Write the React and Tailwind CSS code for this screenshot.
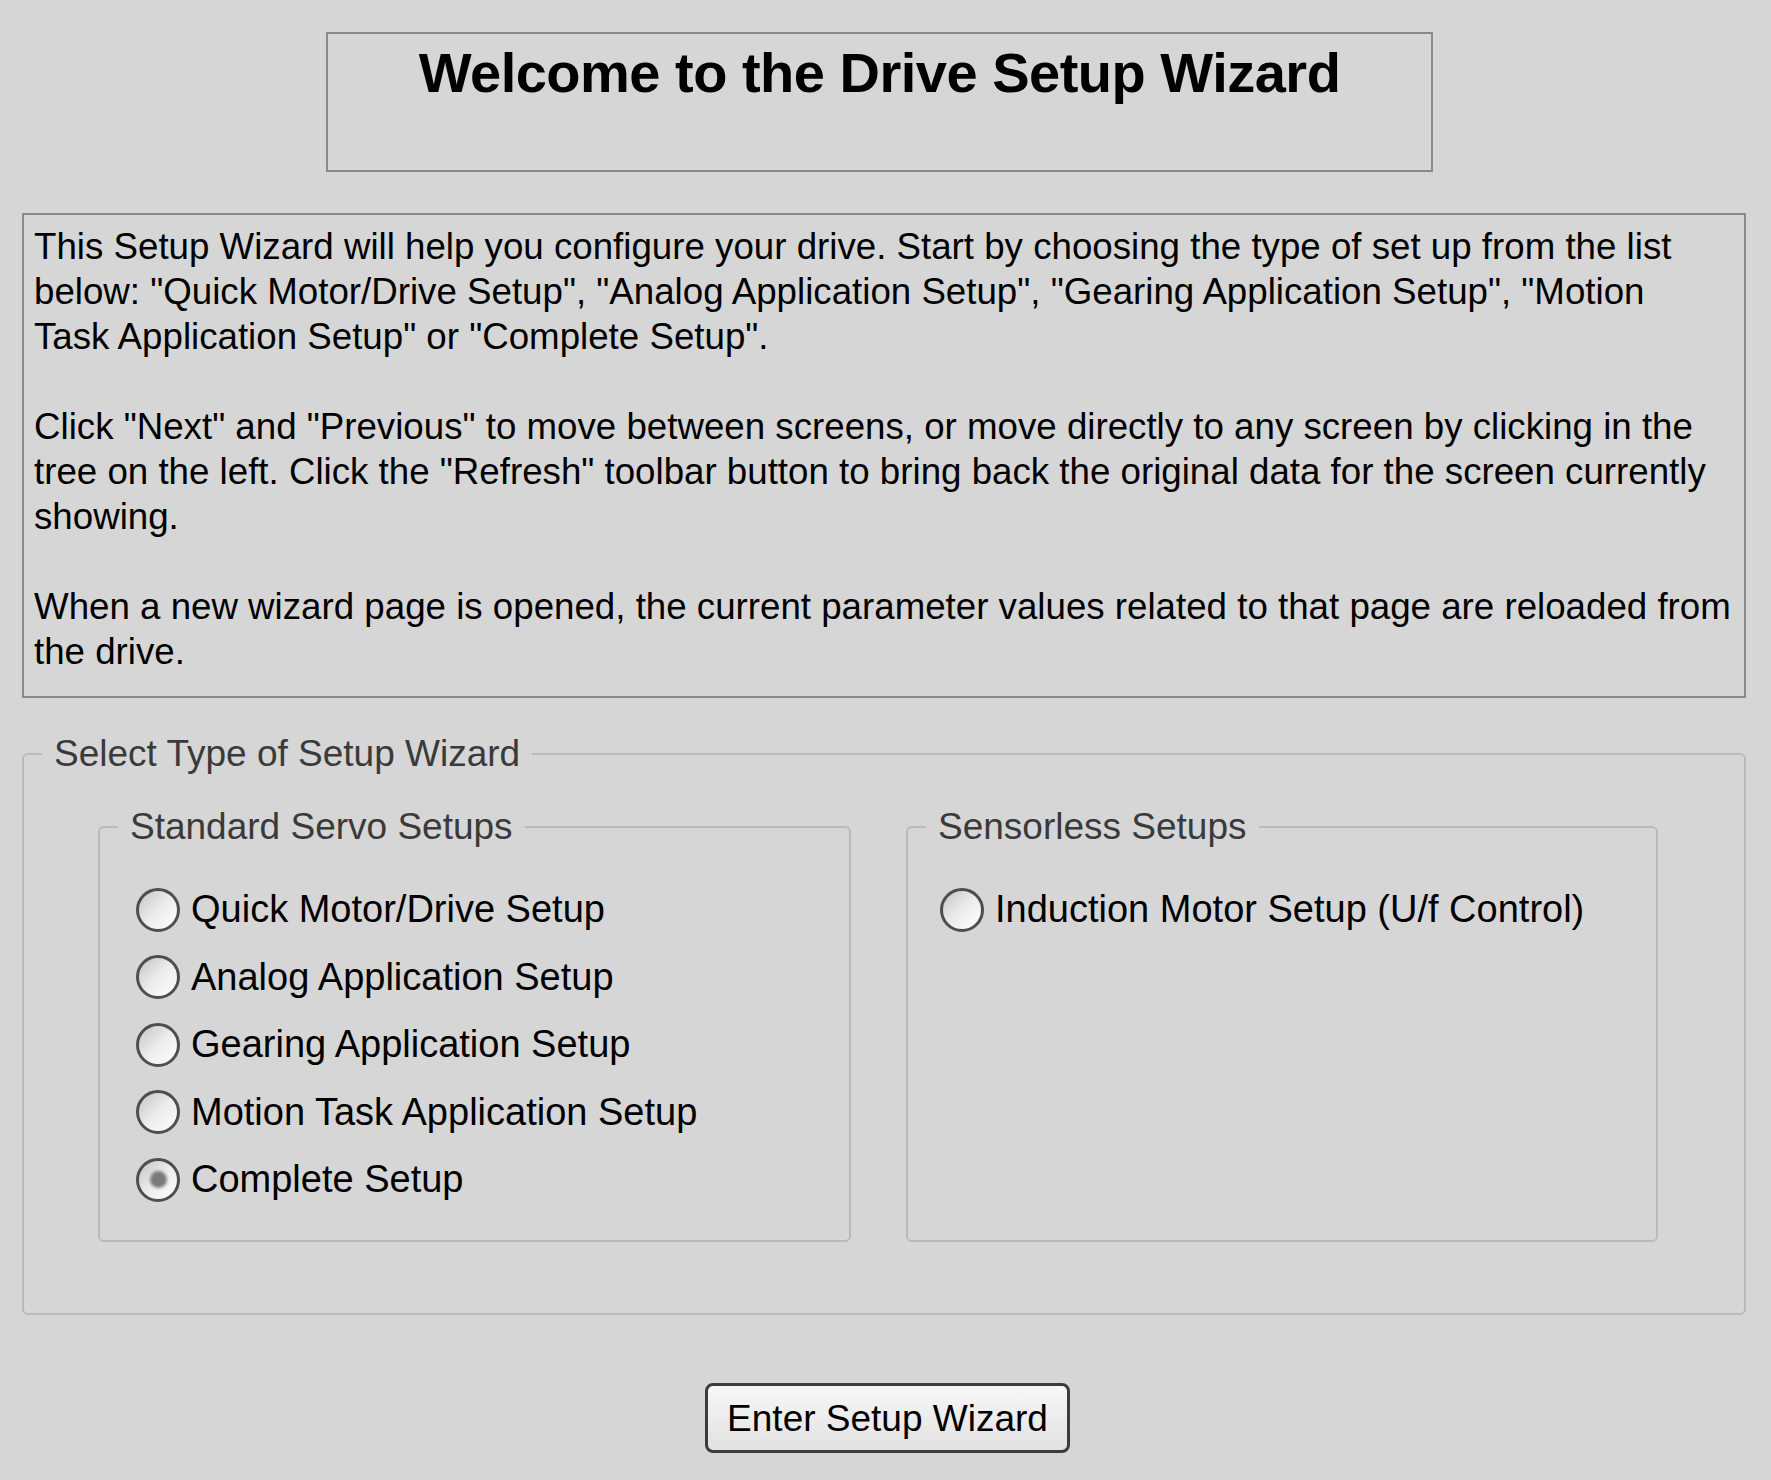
import React from 'react';

const servoOptions = [
  { label: 'Quick Motor/Drive Setup' },
  { label: 'Analog Application Setup' },
  { label: 'Gearing Application Setup' },
  { label: 'Motion Task Application Setup' },
  { label: 'Complete Setup', checked: true },
];

const intro = [
  [
    'This Setup Wizard will help you configure your drive. Start by choosing the type of set up from the list',
    'below: "Quick Motor/Drive Setup", "Analog Application Setup", "Gearing Application Setup", "Motion',
    'Task Application Setup" or "Complete Setup".',
  ],
  [
    'Click "Next" and "Previous" to move between screens, or move directly to any screen by clicking in the',
    'tree on the left. Click the "Refresh" toolbar button to bring back the original data for the screen currently',
    'showing.',
  ],
  [
    'When a new wizard page is opened, the current parameter values related to that page are reloaded from',
    'the drive.',
  ],
];

function Radio({ checked }) {
  return (
    <span className="flex h-[44px] w-[44px] flex-shrink-0 items-center justify-center rounded-full border-[3px] border-[#4e4e4e] bg-gradient-to-br from-[#c4c4c4] via-[#ececec] to-white">
      {checked && <span className="h-[17px] w-[17px] rounded-full bg-[#7a7a7a] blur-[1.5px]" />}
    </span>
  );
}

function Option({ label, checked }) {
  return (
    <div className="flex h-[67.5px] items-center gap-[11px] text-[38px]">
      <Radio checked={checked} />
      <span className="whitespace-nowrap">{label}</span>
    </div>
  );
}

function Group({ title, children, className = '' }) {
  return (
    <fieldset className={`rounded-[6px] border-2 border-[#bababa] p-0 ${className}`}>
      <legend className="ml-[18px] px-[12px] text-[37px] leading-[45px] text-[#3a3a3a]">{title}</legend>
      {children}
    </fieldset>
  );
}

export default function App() {
  return (
    <div className="min-h-screen w-full bg-[#d6d6d6] px-[22px] pt-[32px] font-['Liberation_Sans',Arial,sans-serif] text-[37px] leading-[45px] text-black">
      <div className="ml-[304px] h-[140px] w-[1107px] border-2 border-[#8a8a8a] pt-[11px] text-center">
        <h1 className="text-[56px] font-bold leading-[56px] tracking-[-0.5px]">Welcome to the Drive Setup Wizard</h1>
      </div>

      <div className="mt-[41px] h-[485px] w-[1724px] border-2 border-[#8a8a8a] pl-[10px] pt-[9px] text-[36.7px]">
        {intro.map((para, i) => (
          <p key={i} className={i > 0 ? 'mt-[45px]' : ''}>
            {para.map((line) => (
              <span key={line} className="block whitespace-nowrap">
                {line}
              </span>
            ))}
          </p>
        ))}
      </div>

      <Group title="Select Type of Setup Wizard" className="mt-[33px] w-[1724px] pb-[71px]">
        <div className="mt-[28px] flex gap-[55px] pl-[74px]">
          <Group title="Standard Servo Setups" className="h-[438px] w-[753px]">
            <div className="mt-[27px] pl-[36px]">
              {servoOptions.map((o) => (
                <Option key={o.label} {...o} />
              ))}
            </div>
          </Group>
          <Group title="Sensorless Setups" className="h-[438px] w-[752px]">
            <div className="mt-[27px] pl-[32px]">
              <Option label="Induction Motor Setup (U/f Control)" />
            </div>
          </Group>
        </div>
      </Group>

      <button className="ml-[683px] mt-[68px] h-[70px] w-[365px] rounded-[8px] border-[3px] border-[#3c3c3c] bg-gradient-to-b from-[#f7f7f7] to-[#e2e2e2] text-center text-black">
        Enter Setup Wizard
      </button>
    </div>
  );
}
